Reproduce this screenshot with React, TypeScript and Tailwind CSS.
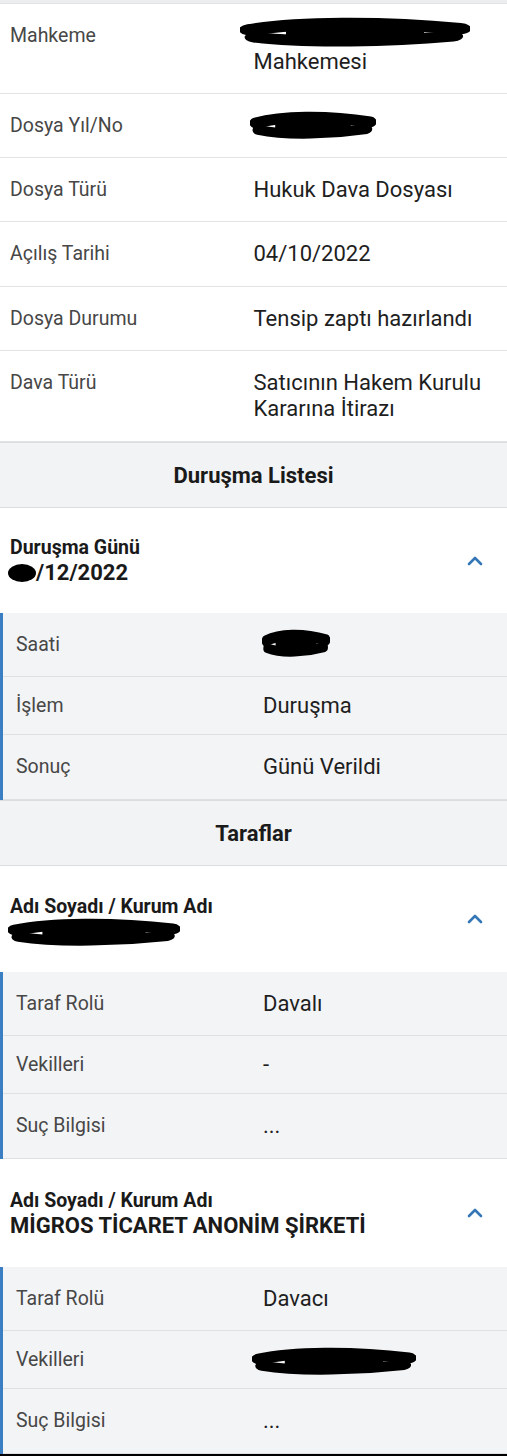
import React from "react";
import { ChevronUp } from "lucide-react";

// black marker scribble used to hide personal data
const Blob: React.FC<{ className: string }> = ({ className }) => (
  <svg
    viewBox="0 0 100 30"
    preserveAspectRatio="none"
    className={`absolute ${className}`}
  >
    <path d="M5 12 C25 5, 60 4, 95 11" stroke="#000" strokeWidth="11" strokeLinecap="round" fill="none" />
    <path d="M7 19 C30 25, 65 23, 92 18" stroke="#000" strokeWidth="10" strokeLinecap="round" fill="none" />
    <path d="M20 15 L80 15" stroke="#000" strokeWidth="12" fill="none" />
  </svg>
);

interface Row {
  label: string;
  value?: React.ReactNode;
  pad?: string;
}

const TopRow: React.FC<Row> = ({ label, value, pad = "pt-[19px] pb-[18px]" }) => (
  <div className={`grid grid-cols-2 px-[10px] ${pad} border-b border-[#e2e3e5] bg-white`}>
    <div className="text-[19.5px] leading-[26px] text-[#474747]">{label}</div>
    <div className="relative text-[22px] leading-[26px] text-[#1e1e1e]">{value}</div>
  </div>
);

const SubRow: React.FC<Row> = ({ label, value, pad = "pt-[19px] pb-[18px]" }) => (
  <div className={`grid grid-cols-[247px_1fr] pl-[13px] ${pad} border-b border-[#dfe0e2]`}>
    <div className="text-[19.5px] leading-[26px] text-[#474747]">{label}</div>
    <div className="relative text-[22px] leading-[26px] text-[#1e1e1e]">{value}</div>
  </div>
);

const SectionTitle: React.FC<{ title: string }> = ({ title }) => (
  <div className="h-[65px] flex items-center justify-center bg-[#f2f3f5] border-b border-[#dcdde0] text-[22px] font-bold text-[#1a1a1a]">
    {title}
  </div>
);

const Accordion: React.FC<{
  title: string;
  sub: React.ReactNode;
  height: string;
  rows: Row[];
}> = ({ title, sub, height, rows }) => (
  <div>
    <div className={`${height} flex items-center justify-between bg-white pl-[10px] pr-[20px]`}>
      <div>
        <div className="text-[19.5px] leading-[24px] font-bold text-[#1a1a1a]">{title}</div>
        <div className="relative text-[22px] leading-[25px] font-bold text-[#1a1a1a]">{sub}</div>
      </div>
      <ChevronUp size={24} strokeWidth={2.6} className="text-[#3476b6]" />
    </div>
    <div className="bg-[#f3f4f6] border-l-[3px] border-[#3b7fc2]">
      {rows.map((r, i) => (
        <SubRow key={i} label={r.label} value={r.value} pad={r.pad} />
      ))}
    </div>
  </div>
);

export default function App() {
  return (
    <div className="w-[507px] min-h-[1456px] bg-white font-['Roboto',sans-serif]">
      <div className="h-[4px] bg-[#eceef0] border-b border-[#e2e3e5]" />

      <TopRow
        label="Mahkeme"
        value={
          <>
            <div className="h-[26px]" />
            <div>Mahkemesi</div>
            <Blob className="left-[-14px] top-[-6px] w-[230px] h-[32px]" />
          </>
        }
      />
      <TopRow
        label="Dosya Yıl/No"
        value={
          <>
            <div className="h-[26px]" />
            <Blob className="left-[-4px] top-[-2px] w-[126px] h-[30px]" />
          </>
        }
      />
      <TopRow label="Dosya Türü" value="Hukuk Dava Dosyası" />
      <TopRow label="Açılış Tarihi" value="04/10/2022" pad="pt-[19px] pb-[19px]" />
      <TopRow label="Dosya Durumu" value="Tensip zaptı hazırlandı" />
      <TopRow
        label="Dava Türü"
        value={
          <>
            Satıcının Hakem Kurulu
            <br />
            Kararına İtirazı
          </>
        }
        pad="pt-[19px] pb-[19px]"
      />

      <div className="h-[1px] bg-[#dcdde0]" />
      <SectionTitle title="Duruşma Listesi" />

      <Accordion
        title="Duruşma Günü"
        height="h-[105px]"
        sub={
          <span className="pl-[26px]">
            /12/2022
            <svg viewBox="0 0 30 20" className="absolute left-[-3px] top-[3px] w-[30px] h-[20px]">
              <ellipse cx="15" cy="10" rx="14" ry="9" fill="#000" />
            </svg>
          </span>
        }
        rows={[
          {
            label: "Saati",
            value: (
              <>
                <div className="h-[26px]" />
                <Blob className="left-[-1px] top-[-3px] w-[68px] h-[30px]" />
              </>
            ),
          },
          { label: "İşlem", value: "Duruşma", pad: "pt-[16px] pb-[15px]" },
          { label: "Sonuç", value: "Günü Verildi", pad: "pt-[19px] pb-[19px]" },
        ]}
      />

      <div className="border-t border-[#dcdde0]" />
      <SectionTitle title="Taraflar" />

      <Accordion
        title="Adı Soyadı / Kurum Adı"
        height="h-[106px]"
        sub={
          <>
            <div className="h-[25px]" />
            <Blob className="left-[-2px] top-[-1px] w-[172px] h-[30px]" />
          </>
        }
        rows={[
          { label: "Taraf Rolü", value: "Davalı" },
          { label: "Vekilleri", value: "-", pad: "pt-[16px] pb-[15px]" },
          { label: "Suç Bilgisi", value: "...", pad: "pt-[19px] pb-[19px]" },
        ]}
      />

      <Accordion
        title="Adı Soyadı / Kurum Adı"
        height="h-[108px]"
        sub="MİGROS TİCARET ANONİM ŞİRKETİ"
        rows={[
          { label: "Taraf Rolü", value: "Davacı" },
          {
            label: "Vekilleri",
            value: (
              <>
                <div className="h-[26px]" />
                <Blob className="left-[-11px] top-[0px] w-[164px] h-[30px]" />
              </>
            ),
            pad: "pt-[16px] pb-[15px]",
          },
          { label: "Suç Bilgisi", value: "...", pad: "pt-[19px] pb-[19px]" },
        ]}
      />
      <div className="h-[4px] bg-black" />
    </div>
  );
}
